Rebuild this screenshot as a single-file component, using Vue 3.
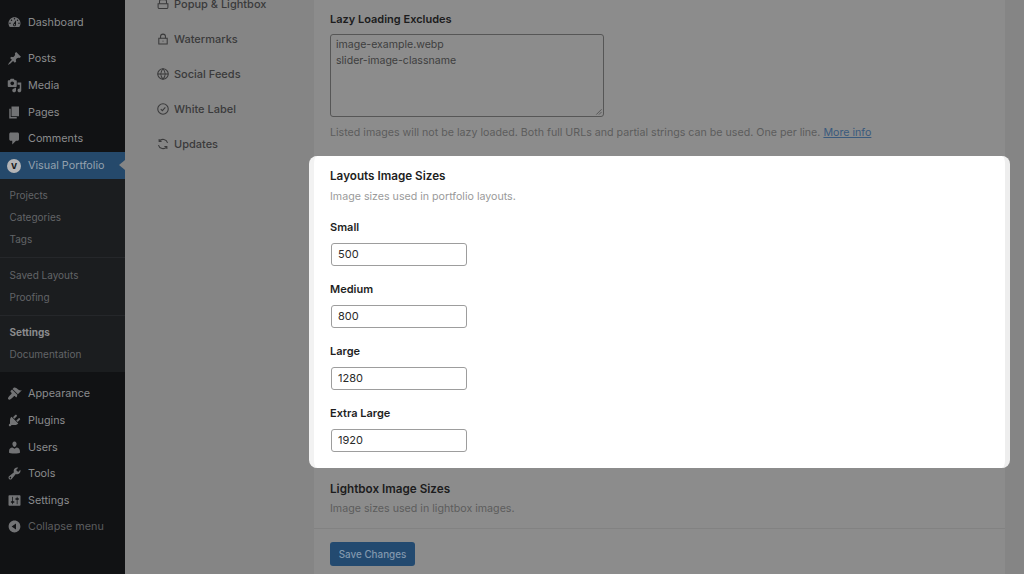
<script setup>
const group1 = [
  { label: 'Posts', d: 'M10.44 3.02l1.82-1.82 6.36 6.35-1.83 1.82c-1.05-.68-2.48-.57-3.41.36l-.75.75c-.92.93-1.04 2.35-.35 3.41l-1.83 1.82-2.41-2.41-2.8 2.79c-.42.42-3.38 2.71-3.8 2.29s1.86-3.39 2.28-3.81l2.79-2.79L4.1 9.36l1.83-1.82c1.05.69 2.48.57 3.4-.36l.75-.75c.93-.92 1.05-2.35.36-3.41z' },
  { label: 'Media', d: 'M13 11V4c0-.55-.45-1-1-1h-1.67L9 1H5L3.67 3H2c-.55 0-1 .45-1 1v7c0 .55.45 1 1 1h10c.55 0 1-.45 1-1zM7 4.5c1.38 0 2.5 1.12 2.5 2.5S8.38 9.5 7 9.5 4.5 8.38 4.5 7 5.62 4.5 7 4.5zM14 6h5v10.5c0 1.38-1.12 2.5-2.5 2.5S14 17.88 14 16.5s1.12-2.5 2.5-2.5c.17 0 .34.02.5.05V9h-3V6zm-4 8.05V13h2v3.5c0 1.38-1.12 2.5-2.5 2.5S7 17.88 7 16.5 8.12 14 9.5 14c.17 0 .34.02.5.05z' },
  { label: 'Pages', d: 'M6 15V2h10v13H6zm-1 1h8v2H3V5h2v11z' },
  { label: 'Comments', d: 'M5 2h9c1.1 0 2 .9 2 2v7c0 1.1-.9 2-2 2h-2l-5 5v-5H5c-1.1 0-2-.9-2-2V4c0-1.1.9-2 2-2z' }
]
const dashboard = 'M3.76 16h12.48c1.1-1.37 1.76-3.11 1.76-5 0-4.42-3.58-8-8-8s-8 3.58-8 8c0 1.89.66 3.63 1.76 5zM10 4c.55 0 1 .45 1 1s-.45 1-1 1-1-.45-1-1 .45-1 1-1zM6 6c.55 0 1 .45 1 1s-.45 1-1 1-1-.45-1-1 .45-1 1-1zm8 0c.55 0 1 .45 1 1s-.45 1-1 1-1-.45-1-1 .45-1 1-1zm-5.37 5.55L12 7v6c0 1.1-.9 2-2 2s-2-.9-2-2c0-.57.24-1.08.63-1.45zM4 10c.55 0 1 .45 1 1s-.45 1-1 1-1-.45-1-1 .45-1 1-1zm12 0c.55 0 1 .45 1 1s-.45 1-1 1-1-.45-1-1 .45-1 1-1zm-5 3c0-.55-.45-1-1-1s-1 .45-1 1 .45 1 1 1 1-.45 1-1z'
const subGroups = [
  [{ label: 'Projects' }, { label: 'Categories' }, { label: 'Tags' }],
  [{ label: 'Saved Layouts' }, { label: 'Proofing' }],
  [{ label: 'Settings', current: true }, { label: 'Documentation' }]
]
const group2 = [
  { label: 'Appearance', d: 'M14.48 11.06L7.41 3.99l1.5-1.5c.5-.56 2.3-.47 3.51.32 1.21.8 1.43 1.28 2.91 2.1 1.18.64 2.45 1.26 4.45.85zm-.71.71L6.7 4.7 4.93 6.47c-.39.39-.39 1.02 0 1.41l1.06 1.06c.39.39.39 1.03 0 1.42-.6.6-3.9 3.9-4.5 5.2-.4.9-.3 1.6.3 2.2s1.3.7 2.2.3c1.3-.6 4.6-3.9 5.2-4.5.39-.39 1.03-.39 1.42 0l1.06 1.06c.39.39 1.02.39 1.41 0z' },
  { label: 'Plugins', d: 'M13.11 4.36L9.87 7.6 8 5.73l3.24-3.24c.35-.34 1.05-.2 1.56.32.52.51.66 1.21.31 1.55zm-8 1.77l.91-1.12 9.01 9.01-1.19.84c-.71.71-2.63 1.16-3.82 1.16H6.14L4.9 17.26c-.59.59-1.54.59-2.12 0-.59-.58-.59-1.53 0-2.12l1.24-1.24v-3.88c0-1.13.4-3.19 1.09-3.89zm7.26 3.97l3.24-3.24c.34-.35 1.04-.21 1.55.31.52.51.66 1.21.31 1.55l-3.24 3.25z' },
  { label: 'Users', d: 'M10 9.25c-2.27 0-2.73-3.44-2.73-3.44C7 4.02 7.82 2 9.97 2c2.16 0 2.98 2.02 2.71 3.81 0 0-.41 3.44-2.68 3.44zm0 2.57L12.72 10c2.39 0 4.52 2.33 4.52 4.53v2.49s-3.65 1.13-7.24 1.13c-3.65 0-7.24-1.13-7.24-1.13v-2.49c0-2.25 1.94-4.48 4.47-4.48z' },
  { label: 'Tools', d: 'M16.68 9.77c-1.34 1.34-3.3 1.67-4.95.99l-5.41 6.52c-.99.99-2.59.99-3.58 0s-.99-2.59 0-3.57l6.52-5.42c-.68-1.65-.35-3.61.99-4.95 1.28-1.28 3.12-1.62 4.72-1.06l-2.89 2.89 2.82 2.82 2.86-2.87c.53 1.58.18 3.39-1.08 4.65zM3.81 16.21c.4.39 1.04.39 1.43 0 .4-.4.4-1.04 0-1.43-.39-.4-1.03-.4-1.43 0-.39.39-.39 1.03 0 1.43z' },
  { label: 'Settings', d: 'M18 16V4c0-.55-.45-1-1-1H3c-.55 0-1 .45-1 1v12c0 .55.45 1 1 1h14c.55 0 1-.45 1-1zM8 11h1c.55 0 1 .45 1 1s-.45 1-1 1H8v1.5c0 .28-.22.5-.5.5s-.5-.22-.5-.5V13H6c-.55 0-1-.45-1-1s.45-1 1-1h1V5.5c0-.28.22-.5.5-.5s.5.22.5.5V11zm5-2h-1c-.55 0-1-.45-1-1s.45-1 1-1h1V5.5c0-.28.22-.5.5-.5s.5.22.5.5V7h1c.55 0 1 .45 1 1s-.45 1-1 1h-1v5.5c0 .28-.22.5-.5.5s-.5-.22-.5-.5V9z' }
]
const collapse = 'M10 2.16c4.33 0 7.84 3.51 7.84 7.84s-3.51 7.84-7.84 7.84S2.16 14.33 2.16 10 5.71 2.16 10 2.16zm2 11.72V6.12L6.18 9.97z'
const navItems = [
  { label: 'Popup & Lightbox', paths: ['M3 9.5h14v5a2 2 0 0 1-2 2H5a2 2 0 0 1-2-2z', 'M5 9.5V6a2 2 0 0 1 2-2h6a2 2 0 0 1 2 2v3.5'] },
  { label: 'Watermarks', paths: ['M4 9h12v8H4z', 'M6.5 9V6.5a3.5 3.5 0 0 1 7 0V9', 'M10 12.5v1.2'] },
  { label: 'Social Feeds', paths: ['M10 2.5a7.5 7.5 0 1 0 0 15 7.5 7.5 0 0 0 0-15z', 'M2.5 10h15', 'M10 2.5c-4 4.5-4 10.5 0 15 4-4.5 4-10.5 0-15z'] },
  { label: 'White Label', paths: ['M10 2.5a7.5 7.5 0 1 0 0 15 7.5 7.5 0 0 0 0-15z', 'M6.8 10.2l2.3 2.2 4.2-4.6'] },
  { label: 'Updates', paths: ['M16.5 8.5A6.8 6.8 0 0 0 4.6 6', 'M4.5 2.8V6.3H8', 'M3.5 11.5A6.8 6.8 0 0 0 15.4 14', 'M15.5 17.2v-3.5H12'] }
]
const sizes = [
  { label: 'Small', value: '500' },
  { label: 'Medium', value: '800' },
  { label: 'Large', value: '1280' },
  { label: 'Extra Large', value: '1920' }
]
</script>

<template>
  <div class="page">
    <aside class="sidebar">
      <a class="menu-row first">
        <svg class="dash" viewBox="0 0 20 20"><path :d="dashboard" /></svg>
        <span>Dashboard</span>
      </a>
      <div class="menu-group">
        <a v-for="item in group1" :key="item.label" class="menu-row">
          <svg class="dash" viewBox="0 0 20 20"><path :d="item.d" /></svg>
          <span>{{ item.label }}</span>
        </a>
      </div>
      <a class="menu-row active">
        <span class="logo">V</span>
        <span>Visual Portfolio</span>
      </a>
      <div class="submenu">
        <div v-for="(group, i) in subGroups" :key="i" class="sub-group">
          <a v-for="item in group" :key="item.label" class="sub-row" :class="{ current: item.current }">{{ item.label }}</a>
        </div>
      </div>
      <div class="menu-group second">
        <a v-for="item in group2" :key="item.label" class="menu-row">
          <svg class="dash" viewBox="0 0 20 20"><path :d="item.d" /></svg>
          <span>{{ item.label }}</span>
        </a>
        <a class="menu-row collapse">
          <svg class="dash" viewBox="0 0 20 20"><path :d="collapse" /></svg>
          <span>Collapse menu</span>
        </a>
      </div>
    </aside>

    <nav class="settings-nav">
      <a v-for="item in navItems" :key="item.label" class="nav-row">
        <svg class="line" viewBox="0 0 20 20"><path v-for="p in item.paths" :key="p" :d="p" /></svg>
        <span>{{ item.label }}</span>
      </a>
    </nav>

    <main class="content">
      <section class="block top">
        <h3 class="label">Lazy Loading Excludes</h3>
        <div class="textarea">
          <div>image-example.webp</div>
          <div>slider-image-classname</div>
          <svg class="grip" viewBox="0 0 8 8"><path d="M7.5 1.5L1.5 7.5M7.5 4.5L4.5 7.5" /></svg>
        </div>
        <p class="help">Listed images will not be lazy loaded. Both full URLs and partial strings can be used. One per line. <a class="link">More info</a></p>
      </section>

      <section class="spot">
        <h3 class="title">Layouts Image Sizes</h3>
        <p class="desc">Image sizes used in portfolio layouts.</p>
        <div v-for="s in sizes" :key="s.label" class="field">
          <label class="label">{{ s.label }}</label>
          <div class="input">{{ s.value }}</div>
        </div>
      </section>

      <section class="block lightbox">
        <h3 class="label">Lightbox Image Sizes</h3>
        <p class="help">Image sizes used in lightbox images.</p>
      </section>

      <footer class="actions">
        <button class="save" type="button">Save Changes</button>
      </footer>
    </main>
    <div class="gutter"></div>
  </div>
</template>

<style scoped>
.page {
  display: flex;
  width: 1024px;
  height: 574px;
  overflow: hidden;
  background: #858585;
  font-family: Inter, "Liberation Sans", sans-serif;
}
.sidebar {
  width: 125px;
  flex: none;
  background: #111214;
  color: #8a8b8d;
  font-size: 10.8px;
  padding-top: 9px;
  box-sizing: border-box;
}
.menu-row {
  display: flex;
  align-items: center;
  height: 26.8px;
  padding-left: 6.5px;
  gap: 6.5px;
}
.menu-group {
  margin-top: 9.3px;
}
.menu-group.second {
  margin-top: 8.3px;
}
.dash {
  width: 15px;
  height: 15px;
  flex: none;
  fill: #727375;
}
.active {
  background: #25496b;
  color: #94a1ae;
  position: relative;
}
.active::after {
  content: "";
  position: absolute;
  right: 0;
  top: 8px;
  border: 5px solid transparent;
  border-right: 6px solid #858585;
  border-left: 0;
}
.logo {
  width: 14px;
  height: 14px;
  margin: 0 0.5px;
  border-radius: 50%;
  background: #b4b5b7;
  color: #1b1d1f;
  font-size: 8px;
  font-weight: 800;
  display: flex;
  align-items: center;
  justify-content: center;
  flex: none;
}
.collapse {
  color: #5c5d5f;
  margin-top: -1px;
}
.submenu {
  background: #1b1d1f;
  padding-top: 4.7px;
}
.sub-group {
  padding-bottom: 7px;
  margin-bottom: 6px;
  border-bottom: 1px solid #25272a;
}
.sub-group:nth-child(2) {
  margin-bottom: 5px;
}
.sub-group:last-child {
  border-bottom: 0;
  margin-bottom: 0;
}
.sub-row {
  display: block;
  height: 22px;
  line-height: 22px;
  padding-left: 9.5px;
  font-size: 10px;
  color: #626467;
}
.current {
  color: #8a8b8d;
  font-weight: 700;
}
.settings-nav {
  width: 189px;
  flex: none;
  padding: 0 0 0 31px;
  box-sizing: border-box;
  margin-top: -13.5px;
}
.nav-row {
  display: flex;
  align-items: center;
  gap: 4px;
  height: 35px;
  font-size: 11px;
  font-weight: 500;
  color: #3a3a3b;
}
.line {
  width: 14px;
  height: 14px;
  fill: none;
  stroke: #3a3a3b;
  stroke-width: 1.5;
  flex: none;
}
.content {
  width: 691px;
  flex: none;
  background: #8c8c8c;
  display: flex;
  flex-direction: column;
  height: 574px;
}
.block {
  padding: 0 16px;
}
.top {
  padding-top: 12px;
  height: 156px;
  box-sizing: border-box;
}
.label {
  margin: 0;
  font-size: 11px;
  line-height: 14px;
  font-weight: 600;
  color: #1c1c1d;
}
.textarea {
  position: relative;
  margin-top: 8px;
  width: 274px;
  height: 83px;
  box-sizing: border-box;
  border: 1px solid #565656;
  border-radius: 3px;
  padding: 2px 5px;
  font-size: 10.55px;
  line-height: 15.5px;
  color: #3e3e3e;
}
.grip {
  position: absolute;
  right: 1px;
  bottom: 1px;
  width: 7px;
  height: 7px;
  fill: none;
  stroke: #444;
  stroke-width: 0.8;
}
.help {
  margin: 9px 0 0;
  font-size: 10.67px;
  line-height: 14px;
  color: #5c5c5c;
  white-space: nowrap;
}
.link {
  color: #3a5a7d;
  text-decoration: underline;
}
.spot {
  height: 312px;
  box-sizing: border-box;
  margin: 0 -5px;
  padding: 13px 0 0 16px;
  background: #fff;
  border-left: 5px solid #f2f2f2;
  border-right: 5px solid #eeeeee;
  border-radius: 8px;
  position: relative;
}
.title {
  margin: 0;
  font-size: 11.7px;
  line-height: 15px;
  font-weight: 600;
  color: #1e1e1e;
}
.desc {
  margin: 5px 0 0;
  font-size: 10.65px;
  line-height: 15px;
  color: #9a9a9a;
}
.field {
  margin-top: 16px;
}
.field .label {
  display: block;
  color: #1e1e1e;
}
.input {
  margin: 9px 0 0 1px;
  width: 136px;
  height: 23px;
  box-sizing: border-box;
  border: 1px solid #9d9d9d;
  border-radius: 3px;
  padding-left: 6px;
  font-size: 11px;
  line-height: 21px;
  color: #2a2a2a;
}
.lightbox {
  padding-top: 14px;
  height: 61px;
  box-sizing: border-box;
  border-bottom: 1px solid #828282;
}
.lightbox .label {
  font-size: 11.7px;
}
.lightbox .help {
  margin-top: 6px;
}
.actions {
  padding: 13px 16px 0;
}
.save {
  width: 85px;
  height: 24px;
  padding: 0;
  border: 0;
  border-radius: 3px;
  background: #234a70;
  color: #8298ae;
  font: 500 9.9px Inter, "Liberation Sans", sans-serif;
}
.gutter {
  flex: 1;
}
</style>
